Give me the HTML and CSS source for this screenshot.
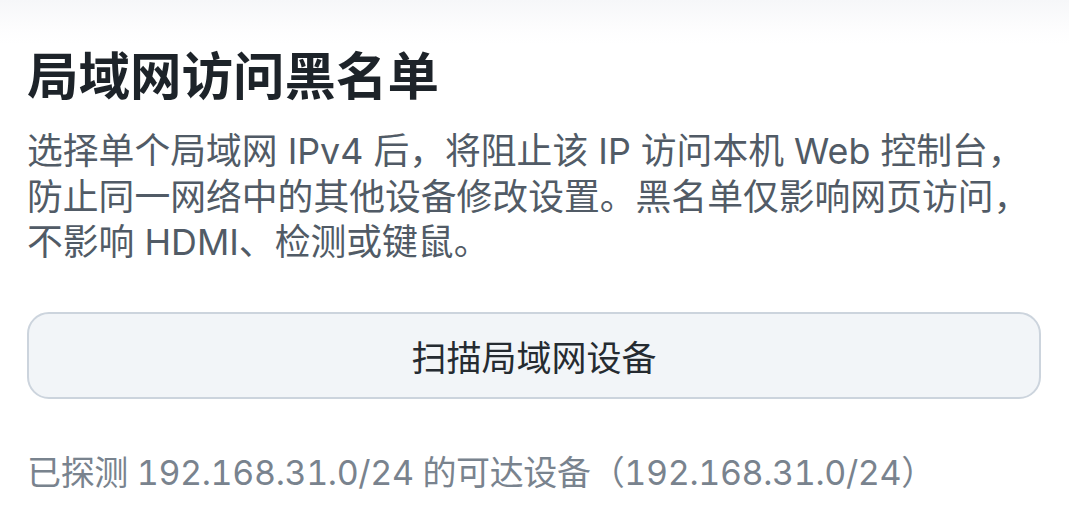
FILE: index.html
```html
<!DOCTYPE html>
<html lang="zh-CN">
<head>
<meta charset="utf-8">
<title>局域网访问黑名单</title>
<link rel="stylesheet" href="styles.css">
</head>
<body>
<div class="topfade"></div>
<main class="page">
  <h1 class="title">局域网访问黑名单</h1>
  <p class="desc">选择单个局域网 IPv4 后，将阻止该 IP 访问本机 Web 控制台，防止同一网络中的其他设备修改设置。黑名单仅影响网页访问，不影响 HDMI、检测或键鼠。</p>
  <button class="scan-btn" type="button">扫描局域网设备</button>
  <p class="status">已探测 192.168.31.0/24 的可达设备（192.168.31.0/24）</p>
</main>
</body>
</html>
```
FILE: styles.css
```css
html, body {
  margin: 0;
  padding: 0;
  background: #ffffff;
}
body {
  font-family: "Inter", "Noto Sans CJK SC", sans-serif;
  position: relative;
  overflow: hidden;
  height: 528px;
}
.topfade {
  position: absolute;
  left: 0;
  right: 0;
  top: 0;
  height: 44px;
  background: linear-gradient(#f6f7f9, rgba(252, 252, 253, 0.6) 70%, rgba(255, 255, 255, 0));
  pointer-events: none;
}
.page {
  padding: 45px 28px 0 27px;
  display: flex;
  flex-direction: column;
}
.title {
  margin: 0;
  font-size: 51.5px;
  line-height: 62px;
  font-weight: 600;
  color: #1d2329;
  letter-spacing: 0;
}
.desc {
  margin: 22px 0 0 0;
  font-size: 35.8px;
  line-height: 45.5px;
  color: #515b66;
}
.scan-btn {
  margin-top: 46px;
  height: 87px;
  width: 100%;
  border: 2px solid #ccd4dd;
  border-radius: 22px;
  background: #f2f5f8;
  font-family: "Inter", "Noto Sans CJK SC", sans-serif;
  font-size: 35px;
  color: #252b31;
  padding: 0;
}
.status {
  margin: 51px 0 0 0;
  font-size: 34px;
  line-height: 45px;
  color: #79838e;
  font-variant-numeric: tabular-nums;
  letter-spacing: -0.35px;
}
```
